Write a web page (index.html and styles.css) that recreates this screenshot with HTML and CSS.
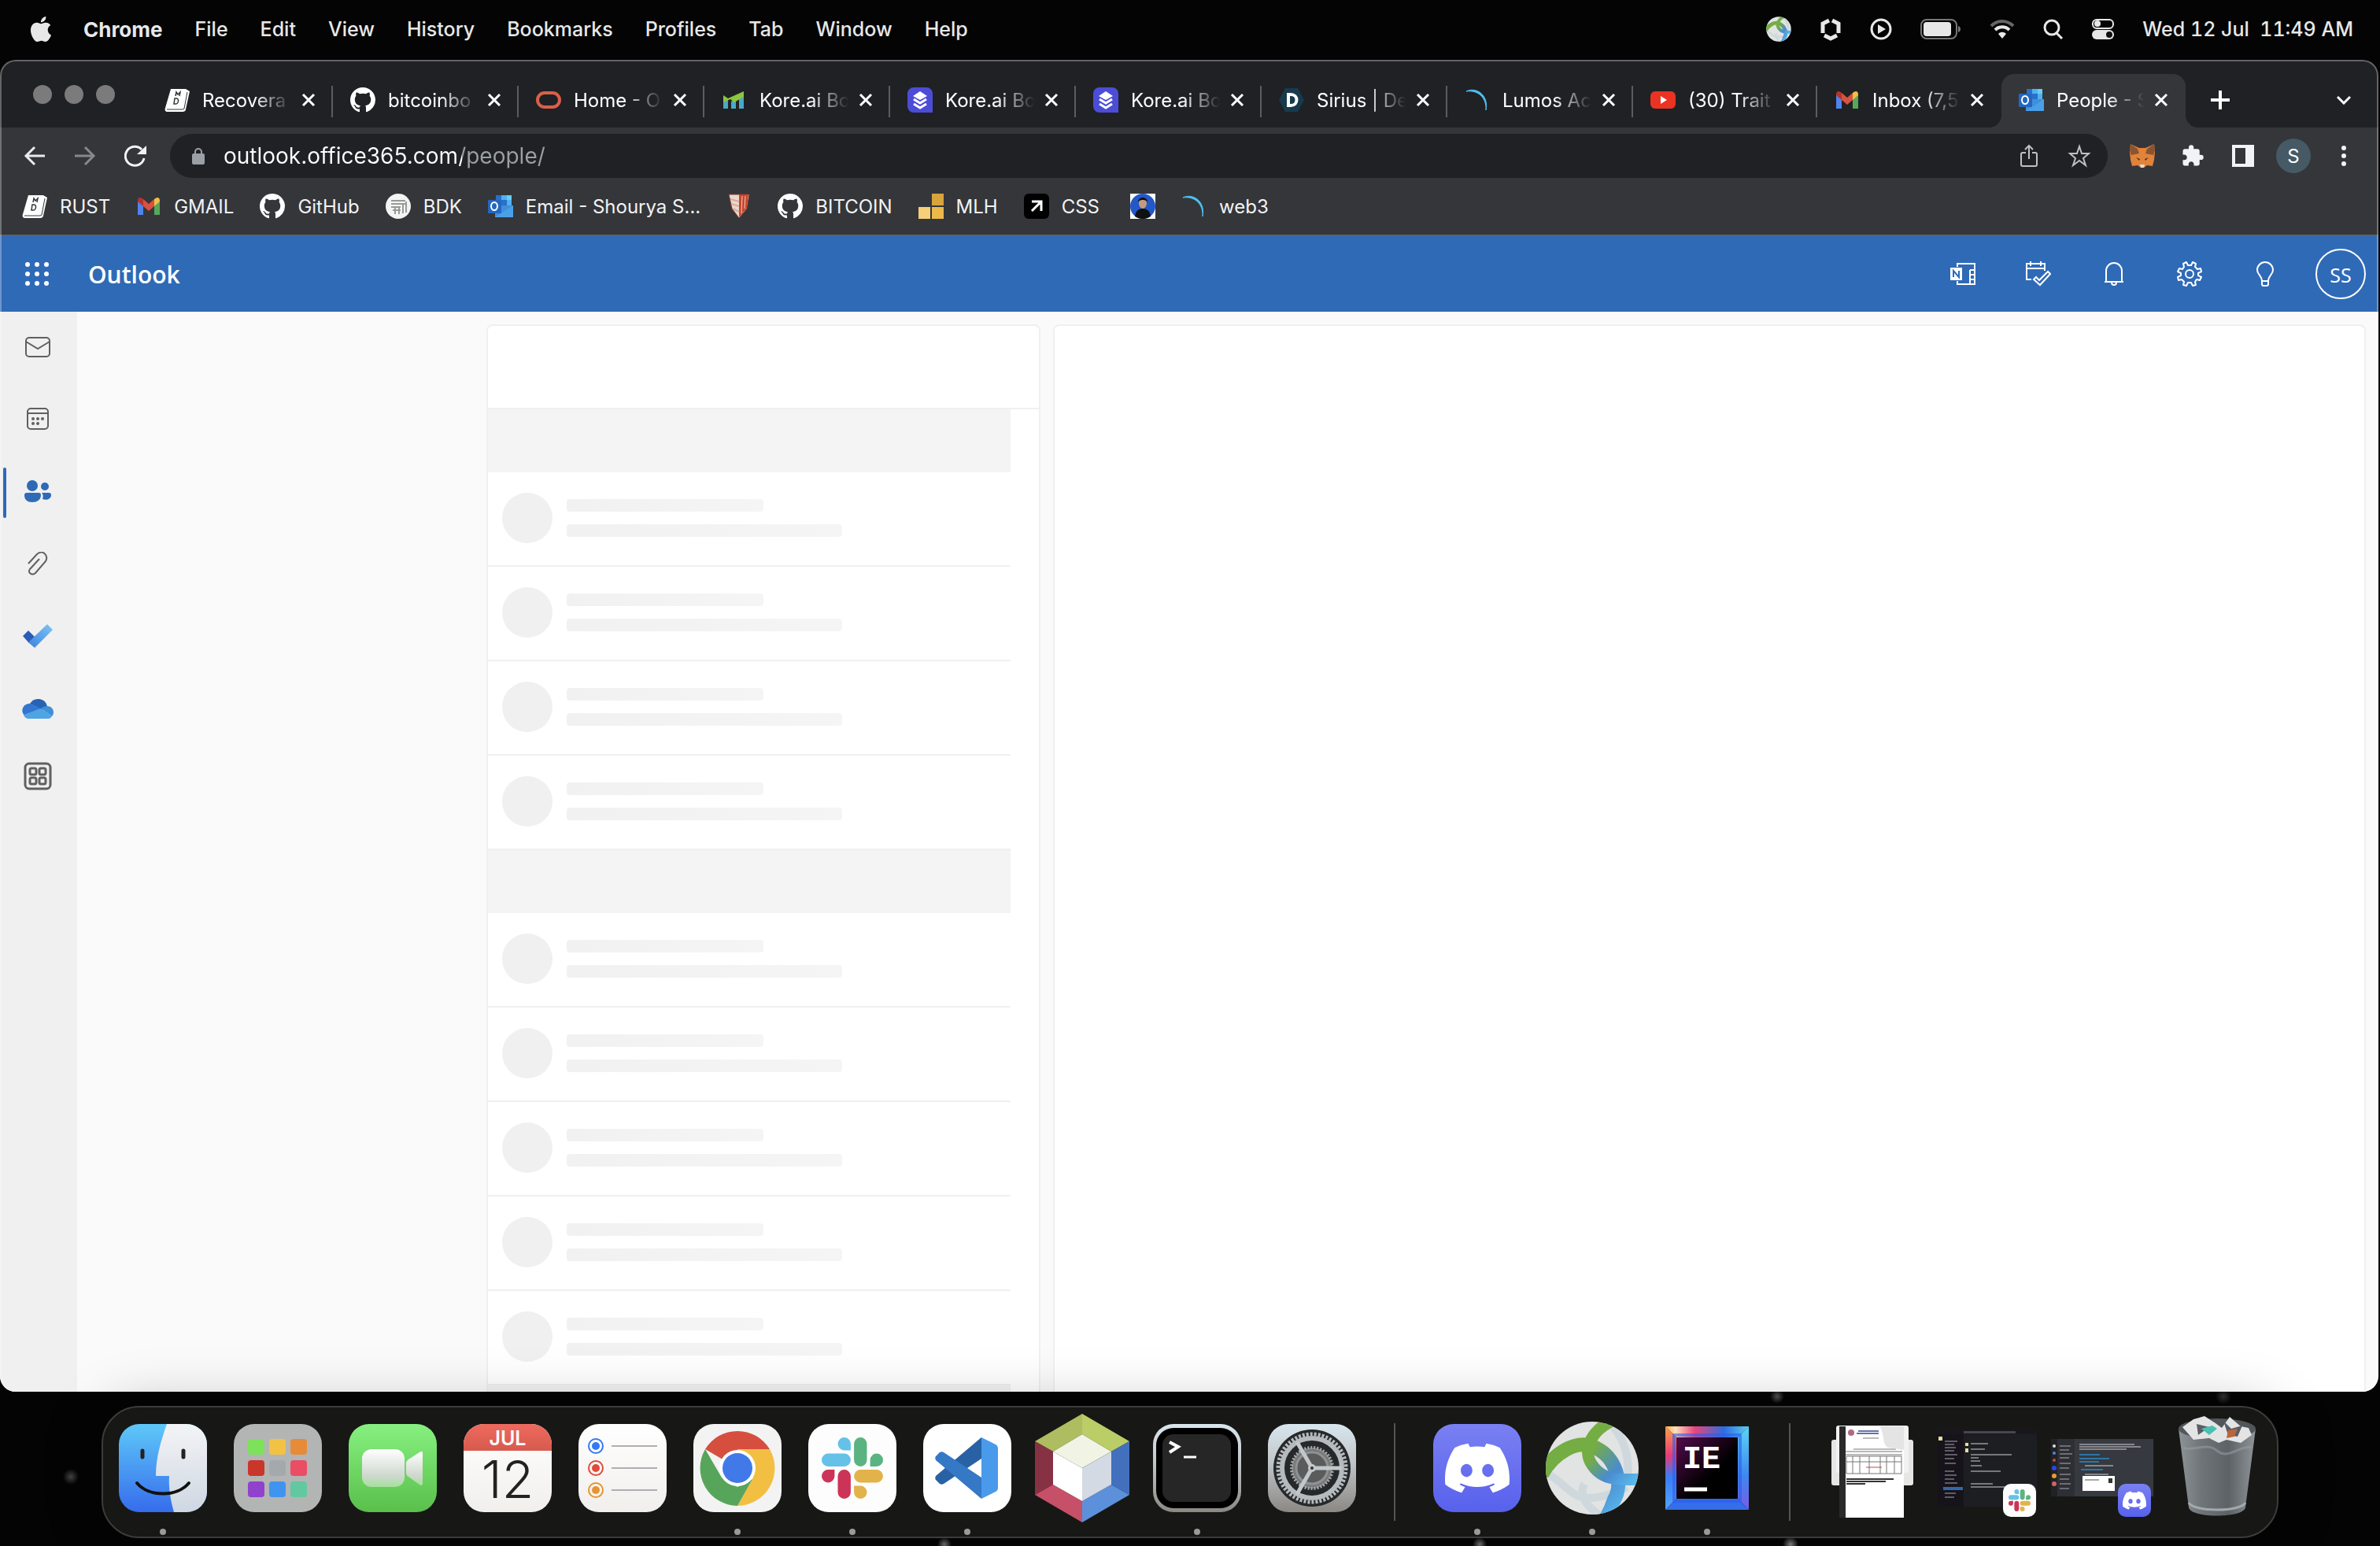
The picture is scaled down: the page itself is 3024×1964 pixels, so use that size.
FILE: index.html
```html
<!DOCTYPE html>
<html lang="en">
<head>
<meta charset="utf-8">
<title>People - Outlook</title>
<link rel="stylesheet" href="styles.css">
</head>
<body>
<svg class="defs" aria-hidden="true">
  <defs>
    <linearGradient id="g-finder" x1="0" y1="0" x2="0" y2="1"><stop offset="0" stop-color="#5ec8f8"/><stop offset="1" stop-color="#366cec"/></linearGradient>
    <linearGradient id="g-face" x1="0" y1="0" x2="0" y2="1"><stop offset="0" stop-color="#f5f5f7"/><stop offset="1" stop-color="#ced7e2"/></linearGradient>
    <linearGradient id="g-ft" x1="0" y1="0" x2="0" y2="1"><stop offset="0" stop-color="#86f080"/><stop offset="1" stop-color="#5abf4b"/></linearGradient>
    <linearGradient id="g-cam" x1="0" y1="0" x2="0" y2="1"><stop offset="0" stop-color="#fff"/><stop offset=".7" stop-color="#cfd8cf"/><stop offset="1" stop-color="#a5e09c"/></linearGradient>
    <linearGradient id="g-paper" x1="0" y1="0" x2="0" y2="1"><stop offset="0" stop-color="#fff"/><stop offset="1" stop-color="#f1efec"/></linearGradient>
    <linearGradient id="g-red" x1="0" y1="0" x2="0" y2="1"><stop offset="0" stop-color="#ef6a5e"/><stop offset="1" stop-color="#d65a4e"/></linearGradient>
    <linearGradient id="g-steel" x1="0" y1="0" x2="0" y2="1"><stop offset="0" stop-color="#d8e6ee"/><stop offset=".4" stop-color="#c3c9cc"/><stop offset="1" stop-color="#8b8884"/></linearGradient>
    <linearGradient id="g-disc" x1="0" y1="0" x2="0" y2="1"><stop offset="0" stop-color="#7a80f2"/><stop offset="1" stop-color="#5761ec"/></linearGradient>
    <linearGradient id="g-link" x1="0" y1="0" x2="1" y2="1"><stop offset="0" stop-color="#74ad43"/><stop offset=".35" stop-color="#74ad43"/><stop offset=".65" stop-color="#4a8cd0"/><stop offset="1" stop-color="#5cc0f0"/></linearGradient>
    <linearGradient id="g-ij1" x1="0" y1="0" x2="1" y2="0"><stop offset="0" stop-color="#fbb03b"/><stop offset=".12" stop-color="#ffe0c0"/><stop offset=".35" stop-color="#e8467c"/><stop offset=".7" stop-color="#2f6be0"/><stop offset="1" stop-color="#5ad0f4"/></linearGradient>
    <linearGradient id="g-ij2" x1="0" y1="0" x2="0" y2="1"><stop offset="0" stop-color="#fba04b"/><stop offset=".35" stop-color="#e83a78"/><stop offset=".6" stop-color="#3a7cf4"/><stop offset="1" stop-color="#4fa4f8"/></linearGradient>
    <linearGradient id="g-ij3" x1="0" y1="0" x2="0" y2="1"><stop offset="0" stop-color="#5cd4f6"/><stop offset=".6" stop-color="#3f86ee"/><stop offset="1" stop-color="#7a5ce8"/></linearGradient>
    <linearGradient id="g-ij4" x1="0" y1="0" x2="1" y2="1"><stop offset="0" stop-color="#540c4c"/><stop offset=".6" stop-color="#000"/></linearGradient>
    <linearGradient id="g-bin" x1="0" y1="0" x2="1" y2="0"><stop offset="0" stop-color="#8d9396"/><stop offset=".3" stop-color="#6e7477"/><stop offset=".65" stop-color="#5c6265"/><stop offset="1" stop-color="#8f9598"/></linearGradient>
    <linearGradient id="g-todo" x1="0" y1="1" x2="1" y2="0"><stop offset="0" stop-color="#3b82e0"/><stop offset="1" stop-color="#7cc6f4"/></linearGradient>

    <symbol id="close" viewBox="0 0 18 18"><path d="M2 2l14 14M16 2L2 16" stroke="#fff" stroke-width="3" fill="none"/></symbol>
    <symbol id="md" viewBox="0 0 32 32"><path d="M8 2h19l5 3-5 23c0 2-2 3-4 3H4c-3 0-4-2-3-5z" fill="#fff"/><path d="M3 28h20l2-1 4-21" stroke="#35363a" stroke-width="1" fill="none"/><g fill="none" stroke="#35363a" stroke-width="1.500"><path d="M14 11l1-5 2 3 3-3-1 5M13 14h2c4 0 3 7-1 7h-2z"/></g></symbol>
    <symbol id="github" viewBox="0 0 16 16"><path fill="#fff" d="M8 0C3.580 0 0 3.580 0 8c0 3.540 2.290 6.530 5.470 7.590.4.070.550-.170.550-.380 0-.190-.010-.820-.010-1.490-2.010.370-2.530-.490-2.690-.940-.090-.230-.480-.940-.820-1.130-.280-.150-.680-.520-.010-.530.630-.010 1.080.580 1.230.820.720 1.210 1.870.870 2.330.660.070-.520.280-.870.510-1.070-1.780-.2-3.640-.890-3.640-3.950 0-.870.310-1.590.820-2.150-.080-.2-.360-1.020.080-2.120 0 0 .670-.210 2.200.820.640-.180 1.320-.270 2-.270s1.360.090 2 .270c1.530-1.040 2.200-.820 2.200-.820.440 1.100.160 1.920.080 2.120.510.560.820 1.270.820 2.150 0 3.070-1.870 3.750-3.650 3.950.290.250.540.730.540 1.480 0 1.070-.010 1.930-.010 2.200 0 .210.150.460.550.380A8.010 8.010 0 0 0 16 8c0-4.420-3.580-8-8-8z"/></symbol>
    <symbol id="oracle" viewBox="0 0 32 32"><rect x="2" y="7" width="28" height="18" rx="9" fill="none" stroke="#d9604a" stroke-width="4"/></symbol>
    <symbol id="chart" viewBox="0 0 32 32"><path d="M2 18v9h6V15zM12 18v9h6v-13zM22 15v12h6V9z" fill="#4aa8c8"/><path d="M2 10l6 4 20-9v7L16 19l-5-4-9 4z" fill="#8cc63f"/></symbol>
    <symbol id="stack" viewBox="0 0 32 32"><path d="M8 0h16a8 8 0 0 1 8 8v24H8a8 8 0 0 1-8-8V8a8 8 0 0 1 8-8z" fill="#4c4dd6"/><path d="M16 5l9 6-9 5-9-5z" fill="#fff"/><path d="M8 15l8 5 8-5M8 21l8 5 8-5" fill="none" stroke="#fff" stroke-width="3"/></symbol>
    <symbol id="hexd" viewBox="0 0 32 32"><path d="M8 1h16l8 15-8 15H8L0 16z" fill="#173a4e"/><path d="M12 9v14h3c10 0 10-14 0-14z" fill="none" stroke="#fff" stroke-width="4"/></symbol>
    <symbol id="arc" viewBox="0 0 32 32"><path d="M2 5C14-1 31 9 27 29 28 14 18 3 2 5z" fill="#4fc0f2" stroke="#4fc0f2"/></symbol>
    <symbol id="youtube" viewBox="0 0 32 32"><rect y="5" width="32" height="22" rx="6" fill="#ea3323"/><path d="M13 11l8 5-8 5z" fill="#fff"/></symbol>
    <symbol id="gmail" viewBox="0 0 32 32"><path d="M2 8v19h7V13z" fill="#5083ec"/><path d="M30 8v19h-7V13z" fill="#58a65c"/><path d="M2 9c0-5 4-5 7-2v9l-7-6z" fill="#b5342a"/><path d="M30 9c0-5-4-5-7-2v9l7-6z" fill="#f2be42"/><path d="M9 7l7 6 7-6v9l-7 6-7-6z" fill="#d95140"/></symbol>
    <symbol id="outlook" viewBox="0 0 32 32"><path d="M10 2h20v13H10z" fill="#2a6fc8"/><path d="M17 2h7v6h-7zM24 8h6v7h-6z" fill="#4fb2ee"/><path d="M24 2h6v6h-6z" fill="#66cdf6"/><path d="M9 15h23v15H9z" fill="#3f8fdc"/><path d="M9 30l23-15v15z" fill="#4aa0e8"/><rect y="8" width="17" height="17" rx="1" fill="#2467c0"/><ellipse cx="8" cy="16" rx="4" ry="5" fill="none" stroke="#fff" stroke-width="2"/></symbol>
    <symbol id="slack" viewBox="0 0 24 24"><g fill="#cc3358"><path d="M5.042 15.165a2.528 2.528 0 0 1-2.520 2.523A2.528 2.528 0 0 1 0 15.165a2.527 2.527 0 0 1 2.522-2.520h2.520zM6.313 15.165a2.527 2.527 0 0 1 2.521-2.520 2.527 2.527 0 0 1 2.521 2.520v6.313A2.528 2.528 0 0 1 8.834 24a2.528 2.528 0 0 1-2.521-2.522z"/></g><g transform="rotate(90 12 12)" fill="#65c1e8"><path d="M5.042 15.165a2.528 2.528 0 0 1-2.520 2.523A2.528 2.528 0 0 1 0 15.165a2.527 2.527 0 0 1 2.522-2.520h2.520zM6.313 15.165a2.527 2.527 0 0 1 2.521-2.520 2.527 2.527 0 0 1 2.521 2.520v6.313A2.528 2.528 0 0 1 8.834 24a2.528 2.528 0 0 1-2.521-2.522z"/></g><g transform="rotate(180 12 12)" fill="#5bb381"><path d="M5.042 15.165a2.528 2.528 0 0 1-2.520 2.523A2.528 2.528 0 0 1 0 15.165a2.527 2.527 0 0 1 2.522-2.520h2.520zM6.313 15.165a2.527 2.527 0 0 1 2.521-2.520 2.527 2.527 0 0 1 2.521 2.520v6.313A2.528 2.528 0 0 1 8.834 24a2.528 2.528 0 0 1-2.521-2.522z"/></g><g transform="rotate(270 12 12)" fill="#e2b34b"><path d="M5.042 15.165a2.528 2.528 0 0 1-2.520 2.523A2.528 2.528 0 0 1 0 15.165a2.527 2.527 0 0 1 2.522-2.520h2.520zM6.313 15.165a2.527 2.527 0 0 1 2.521-2.520 2.527 2.527 0 0 1 2.521 2.520v6.313A2.528 2.528 0 0 1 8.834 24a2.528 2.528 0 0 1-2.521-2.522z"/></g></symbol>
    <symbol id="discord" viewBox="0 0 24 24"><path fill="#fff" d="M20.317 4.370a19.791 19.791 0 00-4.885-1.515.074.074 0 00-.079.037c-.211.375-.445.865-.608 1.250-1.845-.276-3.680-.276-5.487 0-.164-.393-.406-.874-.618-1.250a.077.077 0 00-.079-.037 19.736 19.736 0 00-4.885 1.515.070.070 0 00-.032.028C.533 9.046-.319 13.580.099 18.058a.082.082 0 00.031.056c2.053 1.508 4.041 2.423 5.993 3.029a.078.078 0 00.084-.028c.462-.630.873-1.295 1.226-1.994a.076.076 0 00-.042-.106c-.653-.248-1.274-.550-1.872-.892a.077.077 0 01-.008-.128c.126-.094.252-.192.372-.291a.074.074 0 01.078-.011c3.928 1.793 8.180 1.793 12.061 0a.074.074 0 01.079.010c.120.099.246.198.373.292a.077.077 0 01-.007.128 12.299 12.299 0 01-1.873.891.077.077 0 00-.041.107c.360.698.772 1.363 1.225 1.993a.076.076 0 00.084.029c1.961-.607 3.950-1.522 6.002-3.029a.077.077 0 00.031-.055c.500-5.177-.838-9.674-3.549-13.660a.061.061 0 00-.031-.029zM8.020 15.331c-1.183 0-2.157-1.086-2.157-2.419 0-1.333.956-2.419 2.157-2.419 1.211 0 2.176 1.095 2.157 2.419 0 1.333-.956 2.419-2.157 2.419zm7.975 0c-1.183 0-2.157-1.086-2.157-2.419 0-1.333.955-2.419 2.157-2.419 1.211 0 2.176 1.095 2.157 2.419 0 1.333-.946 2.419-2.157 2.419z"/></symbol>
    <symbol id="anyconnect" viewBox="-60 -60 120 120"><clipPath id="globe"><circle r="59"/></clipPath><circle r="59" fill="#e2e3e3"/><g clip-path="url(#globe)" fill="none"><path d="M27-52c16 20 20 40 18 64M-56 8c20 10 30 30 50 30s40-8 50-14M-10 20c-8 14 4 30 20 40" stroke="#cfd8dc" stroke-width="10"/><path d="M-64 8C-50-18-20-38 4-26 30-14 40 20 28 40 24 52 20 60 14 70" stroke="url(#g-link)" stroke-width="18"/><path d="M30-62C0-50-14-24 0-4 12 14 30 16 64 14" stroke="url(#g-link)" stroke-width="15"/></g></symbol>
  </defs>
</svg>

<header class="menubar">
  <nav class="menus" aria-label="Application menu">
    <button class="menu apple" aria-label="Apple menu"><svg width="32" height="32" viewBox="0 0 24 24"><path fill="#e8e8e8" d="M12.152 6.896c-.948 0-2.415-1.078-3.960-1.040-2.040.027-3.910 1.183-4.961 3.014-2.117 3.675-.546 9.103 1.519 12.090 1.013 1.454 2.208 3.090 3.792 3.039 1.520-.065 2.090-.987 3.935-.987 1.831 0 2.350.987 3.960.948 1.637-.026 2.676-1.480 3.676-2.948 1.156-1.688 1.636-3.325 1.662-3.415-.039-.013-3.182-1.221-3.220-4.857-.026-3.040 2.480-4.494 2.597-4.559-1.429-2.090-3.623-2.324-4.390-2.376-2-.156-3.675 1.090-4.610 1.090zM15.530 3.830c.843-1.012 1.400-2.427 1.245-3.830-1.207.052-2.662.805-3.532 1.818-.780.896-1.454 2.338-1.273 3.714 1.338.104 2.715-.688 3.559-1.701"/></svg></button>
    <button class="menu frontmost">Chrome</button>
    <button class="menu">File</button>
    <button class="menu">Edit</button>
    <button class="menu">View</button>
    <button class="menu">History</button>
    <button class="menu">Bookmarks</button>
    <button class="menu">Profiles</button>
    <button class="menu">Tab</button>
    <button class="menu">Window</button>
    <button class="menu">Help</button>
  </nav>
  <div class="status">
    <svg width="32" height="32"><use href="#anyconnect"/></svg>
    <svg width="28" height="32" viewBox="0 0 28 32" fill="none" stroke="#e8e8e8" stroke-width="5"><path d="M12 5L4 9v12M16 5l8 4v12M6 24l8 4 8-4"/></svg>
    <svg width="28" height="28" viewBox="0 0 28 28"><circle cx="14" cy="14" r="12" fill="none" stroke="#e8e8e8" stroke-width="3"/><path d="M10 8l10 6-10 6z" fill="#e8e8e8"/></svg>
    <svg width="52" height="26" viewBox="0 0 52 26"><rect x="1" y="1" width="45" height="24" rx="7" fill="none" stroke="#777" stroke-width="2"/><rect x="4" y="4" width="35" height="18" rx="4" fill="#e8e8e8"/><path d="M48 9c4 1 4 7 0 8z" fill="#777"/></svg>
    <svg width="32" height="26" viewBox="0 0 32 26" fill="none" stroke-width="4"><path d="M2 9c8-8 20-8 28 0" stroke="#666"/><path d="M7 14c5-5 13-5 18 0" stroke="#e8e8e8"/><path d="M11 19c3-3 7-3 10 0l-5 6z" fill="#e8e8e8"/></svg>
    <svg width="26" height="28" viewBox="0 0 26 28" fill="none" stroke="#e8e8e8" stroke-width="3"><circle cx="11" cy="12" r="9"/><path d="M17 19l7 7"/></svg>
    <svg width="28" height="28" viewBox="0 0 28 28"><rect x="1" y="2" width="26" height="11" rx="5" fill="none" stroke="#e8e8e8" stroke-width="2"/><circle cx="7" cy="7" r="4" fill="#e8e8e8"/><rect y="15" width="28" height="12" rx="6" fill="#e8e8e8"/><circle cx="22" cy="21" r="4" fill="#111"/></svg>
    <time class="clock">Wed 12 Jul&nbsp; 11:49 AM</time>
  </div>
</header>

<main class="window">
  <div class="tabstrip">
    <div class="lights"><i></i><i></i><i></i></div>
    <div class="tabs">
      <div class="tab"><svg class="ico"><use href="#md"/></svg><button class="title">Recovera</button><button class="x" aria-label="Close"><svg><use href="#close"/></svg></button></div>
      <div class="tab"><svg class="ico"><use href="#github"/></svg><button class="title">bitcoinbo</button><button class="x" aria-label="Close"><svg><use href="#close"/></svg></button></div>
      <div class="tab"><svg class="ico"><use href="#oracle"/></svg><button class="title">Home - O</button><button class="x" aria-label="Close"><svg><use href="#close"/></svg></button></div>
      <div class="tab"><svg class="ico"><use href="#chart"/></svg><button class="title">Kore.ai Bo</button><button class="x" aria-label="Close"><svg><use href="#close"/></svg></button></div>
      <div class="tab"><svg class="ico"><use href="#stack"/></svg><button class="title">Kore.ai Bo</button><button class="x" aria-label="Close"><svg><use href="#close"/></svg></button></div>
      <div class="tab"><svg class="ico"><use href="#stack"/></svg><button class="title">Kore.ai Bo</button><button class="x" aria-label="Close"><svg><use href="#close"/></svg></button></div>
      <div class="tab"><svg class="ico"><use href="#hexd"/></svg><button class="title">Sirius | De</button><button class="x" aria-label="Close"><svg><use href="#close"/></svg></button></div>
      <div class="tab"><svg class="ico"><use href="#arc"/></svg><button class="title">Lumos Ac</button><button class="x" aria-label="Close"><svg><use href="#close"/></svg></button></div>
      <div class="tab"><svg class="ico"><use href="#youtube"/></svg><button class="title">(30) Trait</button><button class="x" aria-label="Close"><svg><use href="#close"/></svg></button></div>
      <div class="tab last"><svg class="ico"><use href="#gmail"/></svg><button class="title">Inbox (7,5</button><button class="x" aria-label="Close"><svg><use href="#close"/></svg></button></div>
      <div class="tab active"><svg class="ico"><use href="#outlook"/></svg><button class="title">People - S</button><button class="x" aria-label="Close"><svg><use href="#close"/></svg></button></div>
    </div>
    <button class="newtab" aria-label="New tab"><svg width="24" height="24" viewBox="0 0 24 24"><path d="M12 0v24M0 12h24" stroke="#fff" stroke-width="4"/></svg></button>
    <button class="tabsearch" aria-label="Search tabs"><svg width="18" height="12" viewBox="0 0 18 12"><path d="M1 2l8 8 8-8" stroke="#fff" stroke-width="3" fill="none"/></svg></button>
  </div>

  <div class="toolbar">
    <div class="navs">
      <button aria-label="Back"><svg width="28" height="26" viewBox="0 0 28 26"><path d="M14 2L3 13l11 11M3 13h24" stroke="#e8eaed" stroke-width="3" fill="none"/></svg></button>
      <button aria-label="Forward"><svg width="28" height="26" viewBox="0 0 28 26"><path d="M14 2l11 11-11 11M25 13H1" stroke="#86888b" stroke-width="3" fill="none"/></svg></button>
      <button aria-label="Reload"><svg width="28" height="28" viewBox="0 0 28 28"><path d="M25 17a12 12 0 1 1-3-11" stroke="#f1f3f4" stroke-width="3" fill="none"/><path d="M28 1v11H16z" fill="#f1f3f4"/></svg></button>
    </div>
    <div class="omnibox">
      <svg width="16" height="22" viewBox="0 0 16 22"><rect y="8" width="16" height="14" rx="2" fill="#9aa0a6"/><path d="M4 9V6a4 4 0 0 1 8 0v3" stroke="#9aa0a6" stroke-width="2" fill="none"/></svg>
      <input class="url" type="text" aria-label="Address" value="outlook.office365.com/people/">
      <button aria-label="Share"><svg width="24" height="30" viewBox="0 0 24 30" fill="none" stroke="#bdc1c6" stroke-width="2"><path d="M8 11H4c-1 0-2 1-2 2v13c0 1 1 2 2 2h16c1 0 2-1 2-2V13c0-1-1-2-2-2h-4M12 19V2M7 7l5-5 5 5"/></svg></button>
      <button aria-label="Bookmark"><svg width="30" height="30" viewBox="0 0 30 30"><path d="M15 3l3 9h9l-7 6 3 9-8-6-8 6 3-9-7-6h9z" fill="none" stroke="#bdc1c6" stroke-width="2"/></svg></button>
    </div>
    <div class="exts">
      <button aria-label="MetaMask"><svg width="32" height="30" viewBox="0 0 32 30"><path d="M1 0l11 5h8L31 0l1 10-1 10-2 8-7-1-4 3h-4l-4-3-7 1-2-8L0 10z" fill="#e2833a"/><path d="M1 0l9 6 2 6-10 2L0 8zM31 0l-9 6-2 6 10 2 2-6z" fill="#8a5430"/><path d="M8 17l5 2-1 2zM24 17l-5 2 1 2z" fill="#333"/><path d="M13 26h6l-1 4h-4z" fill="#ddd"/></svg></button>
      <button aria-label="Extensions"><svg width="30" height="30" viewBox="0 0 24 24"><path fill="#f1f3f4" d="M20.500 11H19V7c0-1.100-.9-2-2-2h-4V3.500a2.500 2.500 0 0 0-5 0V5H4c-1.100 0-2 .9-2 2v3.800h1.500c1.500 0 2.700 1.200 2.700 2.700S5 16.200 3.500 16.200H2V20c0 1.100.9 2 2 2h3.800v-1.500c0-1.500 1.200-2.700 2.700-2.700s2.700 1.200 2.700 2.700V22H17c1.100 0 2-.9 2-2v-4h1.500a2.500 2.500 0 0 0 0-5z"/></svg></button>
      <button aria-label="Side panel"><svg width="28" height="28" viewBox="0 0 28 28"><path fill="#f1f3f4" fill-rule="evenodd" d="M0 0h28v28H0zM4 4v20h13V4z"/></svg></button>
      <button class="me" aria-label="Profile">S</button>
      <button aria-label="Menu"><svg width="6" height="28" viewBox="0 0 6 28" fill="#f1f3f4"><circle cx="3" cy="4" r="3"/><circle cx="3" cy="14" r="3"/><circle cx="3" cy="24" r="3"/></svg></button>
    </div>
  </div>

  <nav class="bookmarks" aria-label="Bookmarks">
    <a href="#"><svg class="ico"><use href="#md"/></svg>RUST</a>
    <a href="#"><svg class="ico"><use href="#gmail"/></svg>GMAIL</a>
    <a href="#"><svg class="ico"><use href="#github"/></svg>GitHub</a>
    <a href="#"><svg class="ico" viewBox="0 0 32 32"><circle cx="16" cy="16" r="16" fill="#f4f4f4"/><path d="M7 9h18M7 13h18M7 17h12M9 21h10M22 13v12M26 10v14M12 17v9M17 17v9" stroke="#999" stroke-width="2" fill="none"/></svg>BDK</a>
    <a href="#"><svg class="ico"><use href="#outlook"/></svg>Email - Shourya S...</a>
    <a href="#" aria-label="Shield"><svg class="ico" viewBox="0 0 32 32"><path d="M3 1h26l-3 18-10 12L7 19z" fill="#e8d8d0" stroke="#7a3a2a"/><path d="M16 1h12l-2 17-10 12z" fill="#c8452c"/><path d="M5 7l11 3M6 13l10 3M8 19l8 4" stroke="#e0a898" stroke-width="2"/><path d="M20 3l-1 22M24 3l-1 16" stroke="#f0cfc4" stroke-width="1"/></svg></a>
    <a href="#"><svg class="ico"><use href="#github"/></svg>BITCOIN</a>
    <a href="#"><svg class="ico" viewBox="0 0 32 32"><path d="M17 0h15v15H17z" fill="#d8a43c"/><path d="M0 17h15v15H0z" fill="#f6cf78"/><path d="M17 17h15v15H17z" fill="#ecb94a"/></svg>MLH</a>
    <a href="#"><svg class="ico" viewBox="0 0 32 32"><rect width="32" height="32" rx="6"/><path d="M10 22L21 11M10 10h12v12" stroke="#fff" stroke-width="3" fill="none"/></svg>CSS</a>
    <a href="#" aria-label="Portfolio" class="portrait"><svg class="ico" viewBox="0 0 32 32"><path d="M0 0h32v32H0z" fill="#fff"/><circle cx="16" cy="16" r="16" fill="#2258c8"/><path d="M6 29c1-8 6-10 10-10s9 2 10 10c-6 4-14 4-20 0z" fill="#111"/><ellipse cx="16" cy="12" rx="5" ry="7" fill="#c49a80"/><path d="M10 11c0-8 12-8 12 0-2-4-10-4-12 0z" fill="#111"/></svg></a>
    <a href="#"><svg class="ico"><use href="#arc"/></svg>web3</a>
  </nav>

  <section class="owa">
    <header class="suite">
      <button class="waffle" aria-label="App launcher"><svg width="30" height="30" viewBox="0 0 30 30" fill="#fff"><circle cx="3" cy="3" r="3"/><circle cx="15" cy="3" r="3"/><circle cx="27" cy="3" r="3"/><circle cx="3" cy="15" r="3"/><circle cx="15" cy="15" r="3"/><circle cx="27" cy="15" r="3"/><circle cx="3" cy="27" r="3"/><circle cx="15" cy="27" r="3"/><circle cx="27" cy="27" r="3"/></svg></button>
      <h1>Outlook</h1>
      <div class="suite-actions">
        <button aria-label="OneNote feed"><svg viewBox="0 0 32 32" fill="none" stroke="#fff" stroke-width="2"><path d="M9 7V3h22v26H9v-4M25 11v18M25 11h6M25 17h6M25 23h6"/><path d="M0 8h15v16H0z" fill="#fff" stroke="none"/><path d="M4 20v-8l7 8v-8" stroke="#2f6ab7"/></svg></button>
        <button aria-label="My day"><svg viewBox="0 0 32 32" fill="none" stroke="#fff" stroke-width="2"><path d="M7 23H1V3h23v9M1 9h23M6 0v6M19 0v6M10 23l3-3 4 4 11-11 3 3-13 14z"/></svg></button>
        <button aria-label="Notifications"><svg viewBox="0 0 32 32" fill="none" stroke="#fff" stroke-width="2"><path d="M4 26h24M6 26V12a10 10 0 0 1 20 0v14M13 27c0 4 6 4 6 0"/></svg></button>
        <button aria-label="Settings"><svg viewBox="0 0 32 32" fill="none" stroke="#fff" stroke-width="2"><circle cx="16" cy="16" r="5"/><path d="M12 1l2 4h4l2-4 4 2-1 4 3 3 4-1 1 4-4 2v3l4 2-2 4-4-1-2 3 1 4-4 1-2-4h-4l-2 4-4-1 1-4-3-3-4 1-1-4 4-2v-3l-4-2 2-4 4 1 2-3-1-4z" stroke-linejoin="round"/></svg></button>
        <button aria-label="Tips"><svg viewBox="0 0 32 32" fill="none" stroke="#fff" stroke-width="2"><path d="M12 25c0-7-6-8-6-14a10 10 0 0 1 20 0c0 6-6 7-6 14zM12 25v4c0 1 1 2 2 2h4c1 0 2-1 2-2v-4"/></svg></button>
        <button class="account" aria-label="Account manager"><span>SS</span></button>
      </div>
    </header>
    <div class="body">
      <nav class="rail" aria-label="Modules">
        <a href="#" aria-label="Mail"><svg width="32" height="26" viewBox="0 0 32 26" fill="none" stroke="#606060" stroke-width="2"><rect x="1" y="1" width="30" height="24" rx="4"/><path d="M1 6l15 9 15-9"/></svg></a>
        <a href="#" aria-label="Calendar"><svg width="28" height="28" viewBox="0 0 28 28" fill="none" stroke="#606060" stroke-width="2"><rect x="1" y="1" width="26" height="26" rx="4"/><path d="M1 7h26"/><g fill="#606060" stroke="none"><circle cx="8" cy="14" r="2"/><circle cx="14" cy="14" r="2"/><circle cx="20" cy="14" r="2"/><circle cx="8" cy="20" r="2"/><circle cx="14" cy="20" r="2"/></g></svg></a>
        <a href="#" aria-label="People" class="current"><svg width="34" height="28" viewBox="0 0 34 28" fill="#2f6ab7"><circle cx="10" cy="7" r="7"/><circle cx="26" cy="8" r="5"/><path d="M3 16h15c2 0 3 1 3 3 0 6-5 9-11 9S0 25 0 19c0-2 1-3 3-3zM22 16h9c2 0 3 1 3 3 0 5-6 7-11 5 1-3 1-6-1-8z"/></svg></a>
        <a href="#" aria-label="Files"><svg width="28" height="30" viewBox="0 0 28 30" fill="none" stroke="#606060" stroke-width="2"><path d="M2 15L13 3c7-6 15 1 11 9L11 27c-5 4-10-1-7-5L16 9"/></svg></a>
        <a href="#" aria-label="To Do"><svg width="40" height="32" viewBox="0 0 40 32"><path d="M1 16l7-7 8 8-7 8z" fill="#2b5bb8"/><path d="M8 24L32 1l7 7-23 23z" fill="url(#g-todo)"/></svg></a>
        <a href="#" aria-label="OneDrive"><svg width="40" height="26" viewBox="0 0 40 26"><path d="M10 7a12 12 0 0 1 22 3l-8 6z" fill="#2862b4"/><path d="M3 22C-4 14 4 5 12 7l12 6z" fill="#3376cf"/><path d="M24 13c8-6 16-2 16 5 0 2-1 4-2 5z" fill="#3f8fda"/><path d="M2 21l22-8 14 10c-1 2-3 3-5 3H9c-4 0-6-2-7-5z" fill="#4fa4e4"/></svg></a>
        <a href="#" aria-label="More apps"><svg width="36" height="36" viewBox="0 0 36 36" fill="none" stroke="#606060" stroke-width="3"><rect x="2" y="2" width="32" height="32" rx="5"/><rect x="8" y="8" width="8" height="8" rx="2"/><rect x="20" y="8" width="8" height="8" rx="2"/><rect x="8" y="20" width="8" height="8" rx="2"/><rect x="20" y="20" width="8" height="8" rx="2"/></svg></a>
      </nav>
      <div class="panes">
        <div class="card list">
          <div class="list-head"></div>
          <ul class="rows">
            <li class="band"></li>
            <li class="row"><i class="pic"></i><div class="bars"><i></i><i></i></div></li>
            <li class="row"><i class="pic"></i><div class="bars"><i></i><i></i></div></li>
            <li class="row"><i class="pic"></i><div class="bars"><i></i><i></i></div></li>
            <li class="row"><i class="pic"></i><div class="bars"><i></i><i></i></div></li>
            <li class="band"></li>
            <li class="row"><i class="pic"></i><div class="bars"><i></i><i></i></div></li>
            <li class="row"><i class="pic"></i><div class="bars"><i></i><i></i></div></li>
            <li class="row"><i class="pic"></i><div class="bars"><i></i><i></i></div></li>
            <li class="row"><i class="pic"></i><div class="bars"><i></i><i></i></div></li>
            <li class="row"><i class="pic"></i><div class="bars"><i></i><i></i></div></li>
            <li class="band"></li>
          </ul>
        </div>
        <div class="card detail"></div>
      </div>
    </div>
  </section>
</main>

<footer class="dock">
  <button class="app on" aria-label="Finder"><svg viewBox="-66 -70 132 140"><clipPath id="tile"><rect x="-56" y="-56" width="112" height="112" rx="26"/></clipPath><g clip-path="url(#tile)"><path d="M-56-56H56V56H-56z" fill="url(#g-finder)"/><path d="M5-56C-2-36-9-14-9 10H8c-1 16 2 32 6 46h46V-60z" fill="url(#g-face)"/></g><path d="M-26-22v8M26-22v8" stroke="#222" stroke-width="5" stroke-linecap="round"/><path d="M-33 19C-18 37 18 37 33 19" fill="none" stroke="#111" stroke-width="4" stroke-linecap="round"/></svg></button>
  <button class="app" aria-label="Launchpad"><svg viewBox="-66 -70 132 140"><rect x="-56" y="-56" width="112" height="112" rx="26" fill="#b3b4b4"/><g><rect x="-38" y="-37" width="21" height="20" rx="4" fill="#7be25a"/><rect x="-11" y="-37" width="21" height="20" rx="4" fill="#f2c244"/><rect x="16" y="-37" width="21" height="20" rx="4" fill="#e68c38"/><rect x="-38" y="-10" width="21" height="20" rx="4" fill="#c9362a"/><rect x="-11" y="-10" width="21" height="20" rx="4" fill="#a3a9ad"/><rect x="16" y="-10" width="21" height="20" rx="4" fill="#ea4d64"/><rect x="-38" y="17" width="21" height="20" rx="4" fill="#9142cc"/><rect x="-11" y="17" width="21" height="20" rx="4" fill="#3f94f0"/><rect x="16" y="17" width="21" height="20" rx="4" fill="#62c8a0"/></g></svg></button>
  <button class="app" aria-label="FaceTime"><svg viewBox="-66 -70 132 140"><rect x="-56" y="-56" width="112" height="112" rx="26" fill="url(#g-ft)"/><rect x="-39" y="-24" width="54" height="48" rx="12" fill="url(#g-cam)"/><path d="M17-6c0-2 1-3 3-5l14-9c3-2 4-1 4 1v38c0 3-2 4-4 2L20 11c-2-1-3-3-3-5z" fill="url(#g-cam)"/></svg></button>
  <button class="app" aria-label="Calendar"><svg viewBox="-66 -70 132 140"><g clip-path="url(#tile)"><path d="M-56-56H56V56H-56z" fill="url(#g-paper)"/><path d="M-56-56H56v34H-56z" fill="url(#g-red)"/></g><text class="cal-month" x="0" y="-29">JUL</text><text class="cal-day" x="0" y="38">12</text></svg></button>
  <button class="app" aria-label="Reminders"><svg viewBox="-66 -70 132 140"><rect x="-56" y="-56" width="112" height="112" rx="26" fill="url(#g-paper)"/><g fill="none" stroke-width="2"><circle cx="-34" cy="-28" r="9" stroke="#3478f6"/><circle cx="-34" cy="0" r="9" stroke="#e2493a"/><circle cx="-34" cy="28" r="9" stroke="#e69430"/></g><circle cx="-34" cy="-28" r="5" fill="#3478f6"/><circle cx="-34" cy="0" r="5" fill="#e2493a"/><circle cx="-34" cy="28" r="5" fill="#e69430"/><path d="M-14-28h58M-14 0h58M-14 28h58" stroke="#b0aeb4" stroke-width="2"/></svg></button>
  <button class="app on" aria-label="Google Chrome"><svg viewBox="-66 -70 132 140"><rect x="-56" y="-56" width="112" height="112" rx="26" fill="#f3f3f3"/><path d="M0 0L-41-24A48 48 0 0 1 41-24z" fill="#d64f3e"/><path d="M0-24h41A48 48 0 0 1 0 48L20 12z" fill="#f2bf43"/><path d="M-41-24L-20 12 0 24 19 14 0 48A48 48 0 0 1-41-24z" fill="#57a55b"/><circle r="23" fill="#fff"/><circle r="19" fill="#4279e8"/></svg></button>
  <button class="app on" aria-label="Slack"><svg viewBox="-66 -70 132 140"><rect x="-56" y="-56" width="112" height="112" rx="26" fill="#fdfdfd"/><use href="#slack" x="-39" y="-39" width="78" height="78"/></svg></button>
  <button class="app on" aria-label="Visual Studio Code"><svg viewBox="-66 -70 132 140"><rect x="-56" y="-56" width="112" height="112" rx="26" fill="#fff"/><path d="M18-39L-40 10c-1 2-1 4 0 5l5 5c2 1 3 1 5 0L18-12z" fill="#2862a4"/><path d="M18 39L-40-10c-1-2-1-4 0-5l5-5c2-1 3-1 5 0L18 12z" fill="#3478c6"/><path d="M18-39l18 9c2 1 3 3 3 5v50c0 2-1 4-3 5l-18 9z" fill="#4a9aec"/></svg></button>
  <button class="app" aria-label="NetBeans"><svg viewBox="-66 -70 132 140"><path d="M-60-34L0-69v26L-37-21z" fill="#adbd5f"/><path d="M60-34L0-69v26L37-21z" fill="#bacd66"/><path d="M-60-34l23 13v42l-23 13z" fill="#873244"/><path d="M-60 34l23-13L0 42v27z" fill="#c65067"/><path d="M60-34L37-21v42l23 13z" fill="#4270bc"/><path d="M60 34L37 21 0 42v27z" fill="#5c90da"/><path d="M0-43l37 22L0 0l-37-21z" fill="#f1f4e4"/><path d="M-37-21L0 0v42l-37-21z" fill="#fff"/><path d="M37-21L0 0v42l37-21z" fill="#d3dae4"/></svg></button>
  <button class="app on" aria-label="Terminal"><svg viewBox="-66 -70 132 140"><rect x="-56" y="-56" width="112" height="112" rx="26" fill="url(#g-steel)"/><rect x="-52" y="-51" width="104" height="102" rx="22"/><rect x="-44" y="-43" width="87" height="86" rx="14" fill="#262626"/><path d="M-35-33l11 6-11 7" fill="none" stroke="#fff" stroke-width="4"/><path d="M-17-14H-1" stroke="#fff" stroke-width="3"/></svg></button>
  <button class="app" aria-label="System Settings"><svg viewBox="-66 -70 132 140"><rect x="-56" y="-56" width="112" height="112" rx="26" fill="url(#g-steel)"/><circle r="49" fill="#26282a"/><circle r="43" fill="none" stroke="#b4babd" stroke-width="5" stroke-dasharray="3 2"/><circle r="38" fill="none" stroke="#b4babd" stroke-width="6"/><circle r="26" fill="#77797a" stroke="#a4aaac" stroke-width="4" stroke-dasharray="2 2"/><circle r="20" fill="#5a5c5c" stroke="#8e9293" stroke-width="3"/><path d="M0 0h38M0 0l-19-33M0 0l-19 33" stroke="#c2c8ca" stroke-width="5"/><circle r="5" fill="#c2c8ca"/><circle r="2" fill="#333"/></svg></button>
  <hr>
  <button class="app on" aria-label="Discord"><svg viewBox="-66 -70 132 140"><rect x="-56" y="-56" width="112" height="112" rx="26" fill="url(#g-disc)"/><use href="#discord" x="-41" y="-41" width="82" height="82"/></svg></button>
  <button class="app on" aria-label="AnyConnect"><svg viewBox="-66 -70 132 140"><use href="#anyconnect" x="-60" y="-60" width="120" height="120"/></svg></button>
  <button class="app on" aria-label="IntelliJ IDEA"><svg viewBox="-66 -70 132 140"><path d="M-53-53H53L39-39h-78z" fill="url(#g-ij1)"/><path d="M-53-53l14 14v78l-14 14z" fill="url(#g-ij2)"/><path d="M53-53L39-39v78l14 14z" fill="url(#g-ij3)"/><path d="M-53 53l14-14h78l14 14z" fill="#346ee8"/><path d="M-42-42h84v84h-84z" fill="none" stroke="#2a5cf0" stroke-width="4" opacity=".6"/><path d="M-39-39h78v78h-78z" fill="url(#g-ij4)"/><text class="ij" x="-31" y="0">IE</text><path d="M-29 27H0" stroke="#fff" stroke-width="5"/></svg></button>
  <hr>
  <button class="app" aria-label="Document"><svg viewBox="-66 -70 132 140"><rect x="-52" y="-36" width="104" height="58" rx="3" fill="#e6e6e6"/><rect x="-46" y="-54" width="92" height="60" rx="3" fill="#f2f2f2"/><path d="M-42-53h82V63h-82z" fill="#fff"/><path d="M-42-53h8V63h-8z" fill="#2a2a2a"/><circle cx="-27" cy="-45" r="4" fill="#b06a80"/><path d="M-18-47H8M-20-44H8" stroke="#6872a8" stroke-width="2"/><path d="M-12-38H8M-24-24H30M-34-21H38M-34-17H38" stroke="#777" stroke-width="1"/><path d="M-33-15h70v22h-70zM-33-8h70M-25-15V7M-16-15V7M-4-15V7M10-15V7M18-15V7M28-15V7" fill="none" stroke="#777"/><path d="M-33 14h60M-33 17h50M-33 20h24" stroke="#333" stroke-width="2"/><path d="M-8-1h20" stroke="#c44"/><path d="M9-53h31v30L20-26C12-30 16-44 9-53z" fill="#e4e4e4"/></svg></button>
  <button class="app" aria-label="Slack window"><svg viewBox="-66 -70 132 140"><path d="M-64-49H63v98H-64z" fill="#1d1e22"/><path d="M-64-49h34v98h-34z" fill="#17131a"/><path d="M-64-49H63v6H-64z" fill="#19171d"/><path d="M-30-47H36v3H-30z" fill="#48464e"/><path d="M-54-34h16M-54-30h12M-54-26h14M-54-22h12M-54-17h16M-54-12h12M-54-6h14M-54 4h12M-54 9h15M-54 14h12M-54 19h16M-54 32h14M-54 37h12" stroke="#605c66" stroke-width="2"/><path d="M-56 26h25" stroke="#2f69ac" stroke-width="4"/><path d="M-62-40h5v5h-5zM-28-32h4v4h-4zM-28-25h4v5h-4z" fill="#e8d9a0"/><path d="M-21-31h22M-21-24h18M-21-17h52M-21-13h10M-21-9h12M-21-3h14M-21 4h38M-21 20h28M-21 24h50" stroke="#77787c" stroke-width="2"/><rect x="20" y="20" width="42" height="42" rx="10" fill="#fdfdfd"/><use href="#slack" x="27" y="27" width="28" height="28"/></svg></button>
  <button class="app" aria-label="Discord window"><svg viewBox="-66 -70 132 140"><path d="M-65-37H65v73H-65z" fill="#36393f"/><path d="M-65-37h8v73h-8z" fill="#202225"/><path d="M-57-37h22v73h-22z" fill="#2d2f34"/><path d="M-54-28h14M-54-23h12M-54-18h16M-54-13h12M-54-6h14M-54 0h12M-54 8h14M-54 14h12M-54 20h14M-54 26h12" stroke="#6c6e74" stroke-width="2"/><path d="M-29-30h70M-29-27h78M-29-24h60M-22-3h36M-22 8h30" stroke="#85878c" stroke-width="2"/><path d="M-29-17h26M-29-12h38M-29-8h25M-27 2h28" stroke="#2d76a6" stroke-width="2"/><circle cx="-61" cy="-28" r="2" fill="#ddd"/><circle cx="-61" cy="-19" r="2" fill="#4a86d8"/><circle cx="-61" cy="-10" r="2" fill="#c44"/><circle cx="-61" cy="0" r="3" fill="#2b44e8"/><circle cx="-61" cy="10" r="3" fill="#e89a38"/><circle cx="-61" cy="20" r="3" fill="#c66"/><path d="M-25 10h41v19h-41z" fill="#fff"/><path d="M8 13h5v6H8z" fill="#333"/><path d="M-22 15h18" stroke="#555"/><rect x="20" y="20" width="42" height="42" rx="10" fill="url(#g-disc)"/><use href="#discord" x="26" y="26" width="30" height="30"/></svg></button>
  <button class="app" aria-label="Trash"><svg viewBox="-66 -70 132 140"><path d="M-49-50L-36 50c2 14 70 14 72 0L49-50c-10 14-88 14-98 0z" fill="url(#g-bin)"/><ellipse cy="-50" rx="49" ry="13" fill="#50565a"/><path d="M-44-52l14-10 14-4 14 9 8 6 10-14 14 12 10 2 4 9-14 10-18-4-10 4-12-6-20 2z" fill="#e4e4e4"/><path d="M-26-56l16 4-14 10zM8-60l10 10 14-4-6 14-12-2z" fill="#5a5c66"/><path d="M-20-50l14-4 6 4-10 8z" fill="#4ac0b0"/><path d="M14-48l12-2-4 10-10 2z" fill="#b8663c"/><path d="M-43-26C-30-20-14-34 0-22S30-30 43-26" fill="none" stroke="#9ca2a5" stroke-width="3" opacity=".5"/><path d="M-36 44c6 12 66 12 72 0" fill="none" stroke="#a3a9ac" stroke-width="3"/></svg></button>
</footer>
</body>
</html>
```
FILE: styles.css
```css
* { box-sizing: border-box; }

body {
  margin: 0;
  height: 100vh;
  display: flex;
  flex-direction: column;
  overflow: hidden;
  font-family: Inter, "Liberation Sans", sans-serif;
  background:
    radial-gradient(circle at 90px 1876px, #444 0, transparent 10px),
    radial-gradient(circle at 1200px 1962px, #777 0, transparent 9px),
    radial-gradient(circle at 1880px 1962px, #777 0, transparent 9px),
    radial-gradient(circle at 2275px 1962px, #888 0, transparent 10px),
    radial-gradient(circle at 2258px 1774px, #555 0, transparent 9px),
    radial-gradient(circle at 2825px 1774px, #333 0, transparent 10px),
    #040404;
}

.defs { position: absolute; width: 0; height: 0; }

button {
  margin: 0;
  padding: 0;
  border: 0;
  background: none;
  color: inherit;
  font: inherit;
  display: flex;
  align-items: center;
  justify-content: center;
}

svg { display: block; flex: none; }
.ico { width: 32px; height: 32px; }

/* menu bar */
.menubar {
  flex: none;
  height: 76px;
  padding: 0 34px 2px 36px;
  display: flex;
  align-items: center;
  justify-content: space-between;
  color: #e8e8e8;
  font-size: 25px;
  font-weight: 500;
}
.menus { display: flex; gap: 41px; }
.menu.apple { margin-right: -3px; }
.menu.frontmost { font-size: 26px; font-weight: 700; }
.status { display: flex; align-items: center; gap: 36px; }
.clock { white-space: pre; font-variant-numeric: tabular-nums; }

/* browser window */
.window {
  position: relative;
  flex: 1;
  min-height: 0;
  margin-right: 2px;
  display: flex;
  flex-direction: column;
  border-radius: 20px;
  overflow: hidden;
  background: #35363a;
}
.window::after {
  content: "";
  position: absolute;
  inset: 0;
  border: 2px solid rgba(255, 255, 255, .3);
  border-bottom: 0;
  border-radius: 20px;
  pointer-events: none;
}

.tabstrip {
  flex: none;
  height: 86px;
  padding: 18px 26px 0 42px;
  display: flex;
  align-items: stretch;
  background: #202124;
  color: #fff;
  font-size: 24px;
}
.lights { flex: none; display: flex; gap: 16px; width: 145px; padding-top: 14px; }
.lights i { width: 24px; height: 24px; border-radius: 50%; background: #7b7b7b; }
.tabs { display: flex; flex: 0 1 2590px; min-width: 0; }
.tab {
  position: relative;
  flex: 0 1 236px;
  min-width: 0;
  padding: 0 22px 2px;
  display: flex;
  align-items: center;
}
.tab:nth-child(n+9) { flex-basis: 234px; }
.tab::after {
  content: "";
  position: absolute;
  right: 0;
  top: 15px;
  width: 2px;
  height: 40px;
  background: #5a5c60;
}
.tab.last::after { display: none; }
.tab .title {
  flex: 1;
  min-width: 0;
  margin: 0 0 0 16px;
  justify-content: flex-start;
  white-space: nowrap;
  -webkit-mask-image: linear-gradient(90deg, #000 52%, transparent 90%);
  mask-image: linear-gradient(90deg, #000 52%, transparent 90%);
}
.tab .x svg { width: 18px; height: 18px; }
.tab.active { background: #35363a; border-radius: 16px 16px 0 0; }
.tab.active::before,
.tab.active::after {
  content: "";
  position: absolute;
  top: auto;
  bottom: 0;
  width: 16px;
  height: 16px;
  background: radial-gradient(circle at 0 0, transparent 16px, #35363a 16px);
}
.tab.active::before { right: 100%; }
.tab.active::after { right: auto; left: 100%; background: radial-gradient(circle at 100% 0, transparent 16px, #35363a 16px); }
.newtab { width: 88px; padding-bottom: 2px; }
.tabsearch { margin-left: auto; width: 36px; padding-bottom: 2px; }

.toolbar {
  flex: none;
  height: 72px;
  padding: 0 12px;
  display: flex;
  align-items: center;
}
.navs { display: flex; width: 204px; }
.navs button { width: 64px; height: 56px; }
.omnibox {
  flex: 1;
  height: 56px;
  padding: 0 14px 0 28px;
  display: flex;
  align-items: center;
  border-radius: 28px;
  background: #202124;
}
.omnibox button { width: 64px; height: 56px; }
.omnibox button:last-child { width: 44px; margin-left: 10px; }
.url {
  flex: 1;
  min-width: 0;
  height: 40px;
  margin-left: 24px;
  padding: 0;
  border: 0;
  outline: 0;
  font: 400 28px/40px Inter, "Liberation Sans", sans-serif;
  background: linear-gradient(90deg, #fff 303px, #9aa0a6 303px);
  -webkit-background-clip: text;
  background-clip: text;
  -webkit-text-fill-color: transparent;
}
.exts { display: flex; align-items: center; margin-left: 12px; }
.exts button { width: 64px; height: 56px; }
.exts .me {
  width: 44px;
  height: 44px;
  margin: 0 10px;
  border-radius: 50%;
  background: #455a64;
  color: #fff;
  font-size: 24px;
}

.bookmarks {
  flex: none;
  height: 66px;
  padding: 0 28px 8px;
  display: flex;
  align-items: center;
  gap: 33px;
  border-bottom: 2px solid #5f6064;
  font-size: 24px;
}
.bookmarks a {
  display: flex;
  align-items: center;
  gap: 16px;
  color: #f1f3f4;
  text-decoration: none;
  white-space: nowrap;
}
.bookmarks .portrait { padding-left: 6px; }

/* Outlook */
.owa {
  flex: 1;
  min-height: 0;
  display: flex;
  flex-direction: column;
  background: #fafafa;
}
.suite {
  flex: none;
  height: 96px;
  display: flex;
  align-items: center;
  background: #2f6ab7;
  color: #fff;
  font-family: "Open Sans", "Noto Sans", sans-serif;
}
.waffle { width: 94px; height: 96px; }
.suite h1 { margin: 0 0 0 18px; padding-top: 2px; font-size: 30px; font-weight: 600; line-height: 44px; }
.suite-actions { display: flex; margin-left: auto; }
.suite-actions button { width: 96px; height: 96px; }
.suite-actions svg { width: 32px; height: 32px; }
.account span {
  width: 64px;
  height: 64px;
  border: 2px solid #fff;
  border-radius: 50%;
  font-size: 25px;
  line-height: 62px;
}
.body { flex: 1; min-height: 0; display: flex; }
.rail {
  flex: none;
  width: 98px;
  background: #f0f0f0;
  display: flex;
  flex-direction: column;
}
.rail a {
  position: relative;
  height: 92px;
  padding-right: 2px;
  display: flex;
  align-items: center;
  justify-content: center;
}
.rail a:first-child { height: 90px; }
.rail a:last-child { height: 80px; }
.rail .current::before {
  content: "";
  position: absolute;
  left: 4px;
  top: 16px;
  width: 4px;
  height: 64px;
  border-radius: 2px;
  background: #2f6ab7;
}
.panes {
  flex: 1;
  min-width: 0;
  padding: 16px 16px 0 520px;
  display: flex;
  gap: 16px;
}
.card {
  background: #fff;
  border: 2px solid #f0f0f0;
  border-bottom: 0;
  border-radius: 8px 8px 0 0;
  overflow: hidden;
}
.list { flex: none; width: 704px; }
.detail { flex: 1; }
.list-head { height: 106px; border-bottom: 2px solid #f0f0f0; }
.rows { margin: 0 36px 0 0; padding: 0; list-style: none; }
.band { height: 80px; background: #f4f4f4; }
.row {
  height: 120px;
  padding: 26px 18px 0;
  display: flex;
  gap: 18px;
  border-bottom: 2px solid #f0f0f0;
}
.pic { width: 64px; height: 64px; border-radius: 50%; background: #f0f0f0; }
.bars { flex: 1; padding-top: 8px; display: flex; flex-direction: column; gap: 16px; }
.bars i { width: 250px; height: 16px; border-radius: 4px; background: linear-gradient(90deg, #f1f1f1, #f5f5f5); }
.bars i:last-child { width: 350px; }

/* dock */
.dock {
  position: relative;
  flex: none;
  align-self: center;
  height: 168px;
  margin: 18px 0 10px;
  padding: 0 3px;
  display: flex;
  border: 2px solid #3c3c3b;
  border-radius: 48px;
  background: #171715;
  box-shadow: 0 0 70px rgba(0, 0, 0, .25);
}
.app { position: relative; width: 146px; height: 154px; }
.dock .app svg { width: 132px; height: 140px; }
.dock .on::after {
  content: "";
  position: absolute;
  left: 69px;
  top: 154px;
  width: 8px;
  height: 8px;
  border-radius: 50%;
  background: #9a9a9a;
}
.dock hr { width: 2px; height: 124px; margin: 20px 31px; border: 0; background: #555; }
.cal-month { font: 600 25px Inter, sans-serif; fill: #fff; text-anchor: middle; }
.cal-day { font: 300 66px Inter, sans-serif; fill: #222; text-anchor: middle; }
.ij { font: 700 40px "Liberation Mono", monospace; fill: #fff; }
```
